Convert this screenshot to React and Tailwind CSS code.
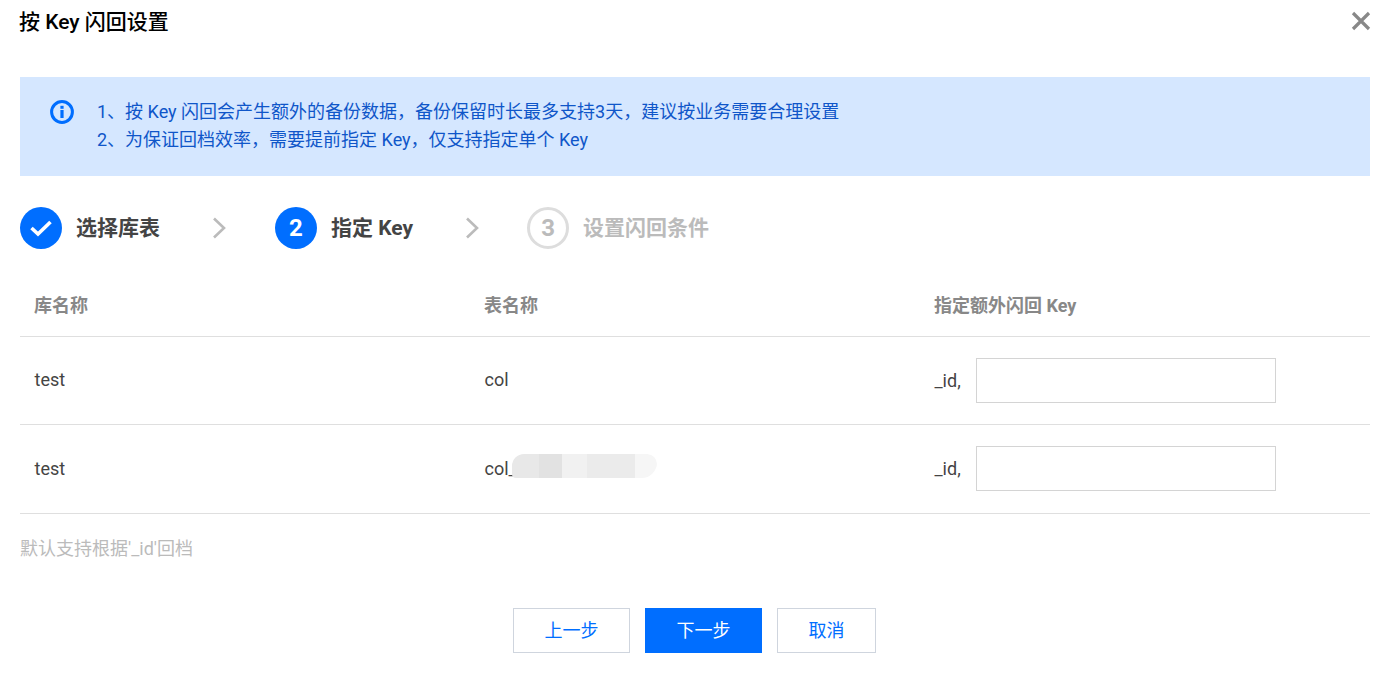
import React from "react";

function Arrow() {
  return (
    <svg width="14" height="22" viewBox="0 0 14 22" className="shrink-0" fill="none">
      <path d="M2 1.5 L12 11 L2 20.5" stroke="#bbbbbb" strokeWidth="2.6" />
    </svg>
  );
}

function Row({ db, table, blur, border = "h-[88px]" }) {
  return (
    <div className={`grid grid-cols-[450px_450px_450px] items-center border-b border-[#dfdfdf] text-[18px] text-[#444444] ${border}`}>
      <div className="pl-[14.5px] mb-[2px]">{db}</div>
      <div className="pl-[14.5px] mb-[2px] relative">
        {table}
        {blur && (
          <div className="absolute left-[42px] top-[-1px] h-[24px] flex overflow-hidden rounded-tl-[12px] rounded-tr-[10px] rounded-bl-[4px]">
            <div className="w-[27px] bg-[#e8e8e8]" />
            <div className="w-[23px] bg-[#e2e2e2]" />
            <div className="w-[25px] bg-[#f1f1f1]" />
            <div className="w-[48px] bg-[#ebebeb]" />
            <div className="w-[22px] bg-[#f6f6f6] rounded-tr-[10px] rounded-br-[18px]" />
          </div>
        )}
      </div>
      <div className="pl-[14.5px] flex items-center self-start pt-[21px]">
        <span className="w-[41.5px]">_id,</span>
        <input className="w-[300px] h-[45px] border border-[#d4d4d4] bg-white outline-none" />
      </div>
    </div>
  );
}

export default function App() {
  return (
    <div className="w-[1395px] h-[685px] overflow-hidden bg-white pl-[20px] pr-[25px] font-['Roboto','Noto_Sans_CJK_SC',sans-serif]">
      <div className="h-[77px] relative">
        <div className="pt-[8px] ml-[-1px] text-[21px] leading-[28px] font-medium text-[#000000]">按 Key 闪回设置</div>
        <svg className="absolute right-[-1px] top-[11px]" width="20" height="20" viewBox="0 0 20 20" fill="none">
          <path d="M2 2 L18 18 M18 2 L2 18" stroke="#888888" strokeWidth="3.2" />
        </svg>
      </div>

      <div className="h-[99px] bg-[#d5e7ff] flex pl-[30px] pt-[21px] text-[18px] leading-[28px] text-[#0f56c9]">
        <svg className="mt-[2px] shrink-0" width="24" height="24" viewBox="0 0 24 24" fill="none">
          <circle cx="12" cy="12" r="10.4" stroke="#006eff" strokeWidth="3" />
          <rect x="10.4" y="5.8" width="3.2" height="3" fill="#006eff" />
          <rect x="10.4" y="10" width="3.2" height="8" fill="#006eff" />
        </svg>
        <div className="ml-[23px]">
          <div>1、按 Key 闪回会产生额外的备份数据，备份保留时长最多支持3天，建议按业务需要合理设置</div>
          <div>2、为保证回档效率，需要提前指定 Key，仅支持指定单个 Key</div>
        </div>
      </div>

      <div className="flex items-center mt-[30px] h-[44px] text-[21px] font-bold">
        <div className="w-[42px] h-[42px] rounded-full bg-[#006eff] flex items-center justify-center">
          <svg width="24" height="18" viewBox="0 0 24 18" fill="none">
            <path d="M2.5 9 L9 15 L21.5 3" stroke="white" strokeWidth="3.6" />
          </svg>
        </div>
        <span className="ml-[14px] pt-[2px] text-[#444444]">选择库表</span>
        <div className="ml-[52px]"><Arrow /></div>
        <div className="ml-[49px] w-[42px] h-[42px] rounded-full bg-[#006eff] flex items-center justify-center text-white text-[24px]">2</div>
        <span className="ml-[14px] pt-[2px] text-[#444444]">指定 Key</span>
        <div className="ml-[52px]"><Arrow /></div>
        <div className="ml-[48px] w-[42px] h-[42px] rounded-full border-[3px] border-[#dddddd] flex items-center justify-center text-[#bbbbbb] text-[24px]">3</div>
        <span className="ml-[14px] pt-[2px] text-[#bbbbbb]">设置闪回条件</span>
      </div>

      <div className="mt-[36px]">
        <div className="grid grid-cols-[450px_450px_450px] items-center h-[51px] pb-[11px] border-b border-[#dfdfdf] text-[18px] font-bold text-[#888888]">
          <div className="pl-[14px]">库名称</div>
          <div className="pl-[14px]">表名称</div>
          <div className="pl-[14px]">指定额外闪回 Key</div>
        </div>
        <Row db="test" table="col" border="h-[88px]" />
        <Row db="test" table="col_" blur border="h-[89px]" />
      </div>

      <div className="mt-[23px] text-[18px] leading-[24px] text-[#bbbbbb]">默认支持根据'_id'回档</div>

      <div className="flex mt-[47px] ml-[493px] text-[18px]">
        <button className="w-[117px] h-[45px] border border-[#cfd5de] bg-white text-[#006eff]">上一步</button>
        <button className="ml-[15px] w-[117px] h-[45px] bg-[#006eff] text-white">下一步</button>
        <button className="ml-[15px] w-[99px] h-[45px] border border-[#cfd5de] bg-white text-[#006eff]">取消</button>
      </div>
    </div>
  );
}
